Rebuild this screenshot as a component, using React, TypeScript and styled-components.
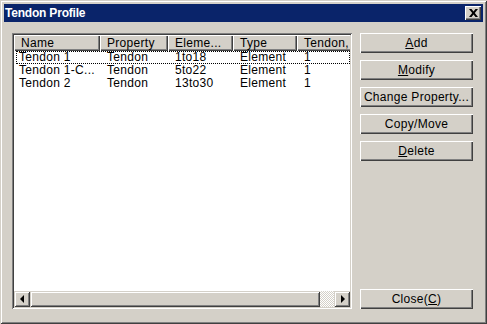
import React from "react";
import styled, { createGlobalStyle } from "styled-components";

const Global = createGlobalStyle`
  html, body { margin: 0; padding: 0; background: #d4d0c8; }
  body { width: 487px; height: 324px; overflow: hidden; }
`;

const FONT = `"Liberation Sans", Arial, sans-serif`;

const Window = styled.div`
  box-sizing: border-box;
  width: 487px;
  height: 324px;
  background: #d4d0c8;
  padding: 4px;
  display: flex;
  flex-direction: column;
  box-shadow: inset 1px 1px #d4d0c8, inset -1px -1px #404040,
    inset 2px 2px #ffffff, inset -2px -2px #808080;
  font-family: ${FONT};
  font-size: 12px;
  letter-spacing: 0.3px;
  color: #000;
`;

const TitleBar = styled.div`
  height: 18px;
  background: #0a246a;
  display: flex;
  align-items: center;
  justify-content: space-between;
  padding: 0 2px 0 1px;
`;

const TitleText = styled.span`
  color: #fff;
  font-weight: bold;
  font-size: 12px;
  letter-spacing: -0.2px;
`;

const TitleButton = styled.div`
  box-sizing: border-box;
  width: 16px;
  height: 14px;
  background: #d4d0c8;
  display: flex;
  align-items: center;
  justify-content: center;
  box-shadow: inset 1px 1px #fff, inset -1px -1px #404040, inset -2px -2px #808080;
`;

const Body = styled.div`
  flex: 1;
  display: flex;
  padding: 11px 6px 11px 8px;
  gap: 8px;
  min-height: 0;
`;

const ListBox = styled.div`
  box-sizing: border-box;
  width: 340px;
  background: #fff;
  padding: 2px;
  display: flex;
  flex-direction: column;
  box-shadow: inset 1px 1px #808080, inset -1px -1px #fff,
    inset 2px 2px #404040, inset -2px -2px #d4d0c8;
`;

const ListContent = styled.div`
  flex: 1;
  overflow: hidden;
  min-height: 0;
`;

const COLS = "86px 68px 65px 64px 80px";

const HeaderRow = styled.div`
  display: grid;
  grid-template-columns: ${COLS};
  height: 16px;
`;

const HeaderCell = styled.div`
  box-sizing: border-box;
  background: #d4d0c8;
  padding-left: 7px;
  line-height: 16px;
  white-space: nowrap;
  overflow: hidden;
  box-shadow: inset 1px 1px #fff, inset -1px -1px #404040, inset -2px -2px #808080;
`;

const Row = styled.div<{ $focused?: boolean }>`
  display: grid;
  grid-template-columns: ${COLS};
  height: 13px;
  line-height: 13px;
  margin-left: 2px;
  width: 334px;
  box-sizing: border-box;
  outline: ${(p) => (p.$focused ? "1px dotted #000" : "none")};
  outline-offset: -1px;
`;

const Cell = styled.div<{ $first?: boolean }>`
  padding-left: ${(p) => (p.$first ? "3px" : "5px")};
  white-space: nowrap;
  overflow: hidden;
`;

const HScroll = styled.div`
  display: flex;
  height: 16px;
`;

const ScrollButton = styled.div`
  box-sizing: border-box;
  width: 16px;
  height: 16px;
  background: #d4d0c8;
  display: flex;
  align-items: center;
  justify-content: center;
  box-shadow: inset 1px 1px #d4d0c8, inset -1px -1px #404040,
    inset 2px 2px #fff, inset -2px -2px #808080;
`;

const Arrow = styled.span<{ $dir: "left" | "right" }>`
  width: 0;
  height: 0;
  border-top: 4px solid transparent;
  border-bottom: 4px solid transparent;
  ${(p) =>
    p.$dir === "left"
      ? "border-right: 4px solid #000; margin-right: 1px;"
      : "border-left: 4px solid #000; margin-left: 1px;"}
`;

const Thumb = styled.div`
  box-sizing: border-box;
  width: 290px;
  height: 16px;
  background: #d4d0c8;
  box-shadow: inset 1px 1px #d4d0c8, inset -1px -1px #404040,
    inset 2px 2px #fff, inset -2px -2px #808080;
`;

const Track = styled.div`
  flex: 1;
  background: repeating-conic-gradient(#d4d0c8 0 25%, #fff 0 50%) 0 0 / 2px 2px;
`;

const ButtonColumn = styled.div`
  width: 113px;
  display: flex;
  flex-direction: column;
  gap: 7px;
`;

const Button = styled.div<{ $last?: boolean }>`
  box-sizing: border-box;
  height: 20px;
  flex: none;
  background: #d4d0c8;
  display: flex;
  align-items: center;
  justify-content: center;
  white-space: nowrap;
  margin-top: ${(p) => (p.$last ? "auto" : "0")};
  box-shadow: inset 1px 1px #fff, inset -1px -1px #404040, inset -2px -2px #808080;
`;

const U = styled.span`
  text-decoration: underline;
`;

const rows = [
  ["Tendon 1", "Tendon", "1to18", "Element", "1"],
  ["Tendon 1-C...", "Tendon", "5to22", "Element", "1"],
  ["Tendon 2", "Tendon", "13to30", "Element", "1"],
];

export default function App() {
  return (
    <>
      <Global />
      <Window>
        <TitleBar>
          <TitleText>Tendon Profile</TitleText>
          <TitleButton>
            <svg width="9" height="8" viewBox="0 0 9 8">
              <path d="M0 0h2.5l2 2.6L6.5 0H9L5.8 4 9 8H6.5l-2-2.6L2.5 8H0l3.2-4z" fill="#000" />
            </svg>
          </TitleButton>
        </TitleBar>
        <Body>
          <ListBox>
            <ListContent>
              <HeaderRow>
                <HeaderCell>Name</HeaderCell>
                <HeaderCell>Property</HeaderCell>
                <HeaderCell>Eleme...</HeaderCell>
                <HeaderCell>Type</HeaderCell>
                <HeaderCell>Tendon,</HeaderCell>
              </HeaderRow>
              {rows.map((r, i) => (
                <Row key={i} $focused={i === 0}>
                  {r.map((c, j) => (
                    <Cell key={j} $first={j === 0}>
                      {c}
                    </Cell>
                  ))}
                </Row>
              ))}
            </ListContent>
            <HScroll>
              <ScrollButton>
                <Arrow $dir="left" />
              </ScrollButton>
              <Thumb />
              <Track />
              <ScrollButton>
                <Arrow $dir="right" />
              </ScrollButton>
            </HScroll>
          </ListBox>
          <ButtonColumn>
            <Button>
              <U>A</U>dd
            </Button>
            <Button>
              <U>M</U>odify
            </Button>
            <Button>Change Property...</Button>
            <Button>Copy/Move</Button>
            <Button>
              <U>D</U>elete
            </Button>
            <Button $last>
              Close(<U>C</U>)
            </Button>
          </ButtonColumn>
        </Body>
      </Window>
    </>
  );
}
